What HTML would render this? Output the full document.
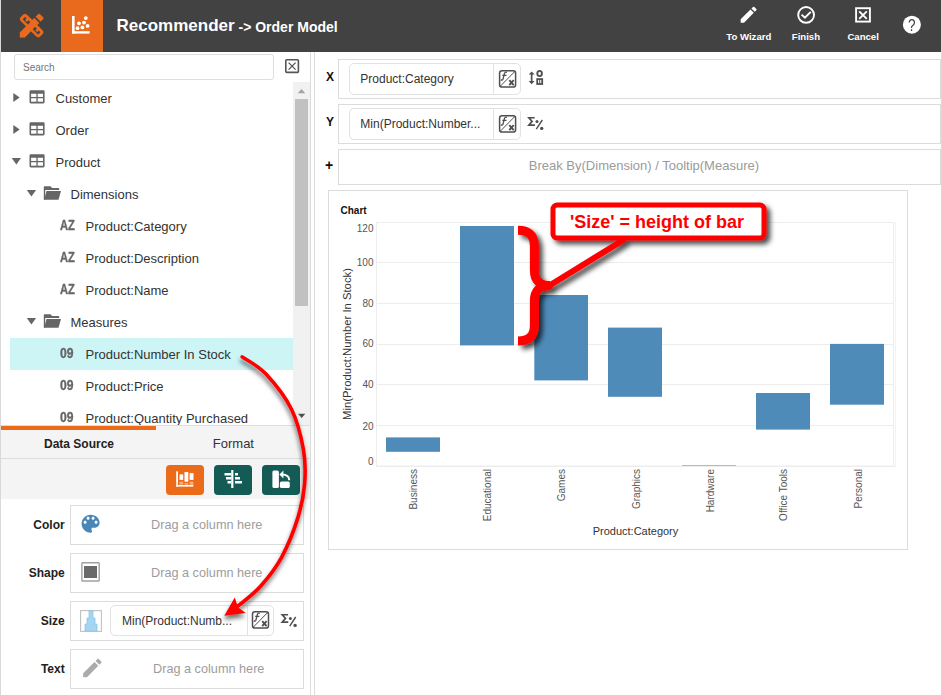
<!DOCTYPE html>
<html><head><meta charset="utf-8">
<style>
*{box-sizing:border-box}
html,body{margin:0;padding:0}
body{width:942px;height:695px;overflow:hidden;position:relative;background:#fff;font-family:"Liberation Sans",sans-serif;color:#333}
.a{position:absolute}
.t{position:absolute;white-space:nowrap;line-height:normal}
.b{font-weight:bold}
svg{position:absolute;overflow:visible}
</style></head><body>

<!-- page borders -->
<div class="a" style="left:0;top:0;width:1px;height:695px;background:#d9d9d9"></div>
<div class="a" style="left:941px;top:0;width:1px;height:695px;background:#d9d9d9"></div>

<!-- HEADER -->
<div class="a" style="left:1px;top:0;width:940px;height:52px;background:#424242"></div>
<div class="a" style="left:61px;top:0;width:42px;height:52px;background:#e96a1d"></div>
<div id="title" class="t b" style="left:116.5px;top:15.9px;font-size:17px;color:#fff">Recommender</div>
<div class="t b" style="left:238.5px;top:18.6px;font-size:14px;color:#fff">-&gt; Order Model</div>

<div class="t b" style="left:708.85px;width:80px;text-align:center;top:31.4px;font-size:9.6px;color:#fff">To Wizard</div>
<div class="t b" style="left:765.95px;width:80px;text-align:center;top:31.4px;font-size:9.6px;color:#fff">Finish</div>
<div class="t b" style="left:823.15px;width:80px;text-align:center;top:31.4px;font-size:9.6px;color:#fff">Cancel</div>




<!-- header icons -->
<svg style="left:15.8px;top:10.4px" width="31.3" height="31.3" viewBox="0 0 24 24"><path fill="#e96a1d" stroke="#e96a1d" stroke-width="0.2" d="M16.24 11.51l1.57-1.57-3.75-3.75-1.57 1.56-4.14-4.13c-.78-.78-2.050-.78-2.83 0l-1.9 1.9c-.78.78-.78 2.05 0 2.83l4.13 4.13L3 17.25V21h3.75l4.76-4.76 4.13 4.13c.95.95 2.23.6 2.830 0l1.9-1.9c.78-.78.78-2.05 0-2.83l-4.13-4.13zm-7-.24L5.04 7.06l1.89-1.9L8.2 6.44l-1.18 1.18 1.41 1.41 1.19-1.19 1.45 1.45-1.82 1.88zm7.71 7.71l-4.21-4.21 1.9-1.9 1.45 1.45-1.18 1.18 1.41 1.41 1.18-1.18 1.27 1.27-1.82 1.980zM20.71 7.04c.39-.39.39-1.02 0-1.41l-2.34-2.34c-.47-.47-1.12-.29-1.41 0l-1.83 1.83 3.75 3.75 1.83-1.83z"/></svg>
<svg style="left:0;top:0" width="942" height="52">
<g fill="#fff">
<rect x="72" y="16" width="2.6" height="17.6"/>
<rect x="72" y="31.2" width="17.6" height="2.4"/>
<circle cx="85.8" cy="18.1" r="1.9"/>
<circle cx="84" cy="22.6" r="1.9"/>
<circle cx="79" cy="23.3" r="1.9"/>
<circle cx="87.6" cy="25.9" r="1.9"/>
<circle cx="82.4" cy="27.4" r="1.9"/>
<circle cx="77.5" cy="28.2" r="1.9"/>
</g>
</svg>
<svg style="left:738.3px;top:4.2px" width="21.3" height="21.3" viewBox="0 0 24 24"><path fill="#fff" d="M3 17.25V21h3.75L17.81 9.94l-3.75-3.75L3 17.25zM20.71 7.04c.39-.39.39-1.020 0-1.41l-2.34-2.34c-.39-.39-1.02-.39-1.41 0l-1.83 1.83 3.75 3.75 1.83-1.83z"/></svg>
<svg style="left:0;top:0" width="942" height="52">
<circle cx="806.1" cy="14.9" r="7.9" fill="none" stroke="#fff" stroke-width="1.9"/>
<polyline points="801.6,14.6 804.9,17.7 810.8,11.8" fill="none" stroke="#fff" stroke-width="1.9"/>
<rect x="856.1" y="8.2" width="13.8" height="13.4" fill="none" stroke="#fff" stroke-width="1.9"/>
<path d="M859.2,11.3 L866.8,18.9 M866.8,11.3 L859.2,18.9" stroke="#fff" stroke-width="1.9"/>
<circle cx="911.9" cy="24.7" r="9" fill="#fff"/>
</svg>
<div class="t" style="left:907.6px;top:16px;font-size:16.5px;color:#424242;transform-origin:0 0;transform:scaleX(0.82)">?</div>

<!-- LEFT PANEL -->
<div class="a" style="left:310px;top:52px;width:1px;height:643px;background:#dcdcdc"></div>
<div class="a" style="left:314px;top:52px;width:1px;height:643px;background:#dcdcdc"></div>

<div class="a" style="left:14px;top:54px;width:260px;height:26px;border:1px solid #dedede;border-radius:3px"></div>
<div class="t" style="left:23px;top:61.5px;font-size:10px;color:#757575">Search</div>

<!-- scrollbar -->
<div class="a" style="left:293px;top:82px;width:17px;height:343px;background:#f1f1f1"></div>
<div class="a" style="left:295px;top:99px;width:13px;height:207px;background:#c1c1c1"></div>

<!-- highlight -->
<div class="a" style="left:10px;top:338px;width:283px;height:32px;background:#cdf5f5"></div>

<!-- tree text -->
<div class="t" style="left:55.5px;top:91px;font-size:13px">Customer</div>
<div class="t" style="left:55.5px;top:123px;font-size:13px">Order</div>
<div class="t" style="left:55.5px;top:155px;font-size:13px">Product</div>
<div class="t" style="left:70.5px;top:187px;font-size:13px">Dimensions</div>
<div class="t" style="left:85.5px;top:219px;font-size:13px">Product:Category</div>
<div class="t" style="left:85.5px;top:251px;font-size:13px">Product:Description</div>
<div class="t" style="left:85.5px;top:283px;font-size:13px">Product:Name</div>
<div class="t" style="left:70.5px;top:315px;font-size:13px">Measures</div>
<div class="t" style="left:85.5px;top:347px;font-size:13px">Product:Number In Stock</div>
<div class="t" style="left:85.5px;top:379px;font-size:13px">Product:Price</div>
<div class="a" style="left:1px;top:400px;width:292px;height:25px;overflow:hidden">
<div class="t" style="left:84.5px;top:11px;font-size:13px">Product:Quantity Purchased</div>
</div>

<svg style="left:0;top:0" width="310" height="430">
<g fill="#666">
<polygon points="13.3,93 19.7,97.5 13.3,102"/>
<polygon points="13.3,125 19.7,129.5 13.3,134"/>
<polygon points="11.7,158 21.0,158 16.35,164.5"/>
<polygon points="26.8,190 36.1,190 31.450000000000003,196.5"/>
<polygon points="26.8,318 36.1,318 31.450000000000003,324.5"/>
</g>
<g transform="translate(29.5,90.3)"><rect x="0" y="0" width="15.1" height="13.1" rx="1.3" fill="#666"/><g fill="#fff"><rect x="1.6" y="3.45" width="5.3" height="3.2"/><rect x="8.2" y="3.45" width="5.3" height="3.2"/><rect x="1.6" y="7.95" width="5.3" height="3.45"/><rect x="8.2" y="7.95" width="5.3" height="3.45"/></g></g>
<g transform="translate(29.5,122.3)"><rect x="0" y="0" width="15.1" height="13.1" rx="1.3" fill="#666"/><g fill="#fff"><rect x="1.6" y="3.45" width="5.3" height="3.2"/><rect x="8.2" y="3.45" width="5.3" height="3.2"/><rect x="1.6" y="7.95" width="5.3" height="3.45"/><rect x="8.2" y="7.95" width="5.3" height="3.45"/></g></g>
<g transform="translate(29.5,154.3)"><rect x="0" y="0" width="15.1" height="13.1" rx="1.3" fill="#666"/><g fill="#fff"><rect x="1.6" y="3.45" width="5.3" height="3.2"/><rect x="8.2" y="3.45" width="5.3" height="3.2"/><rect x="1.6" y="7.95" width="5.3" height="3.45"/><rect x="8.2" y="7.95" width="5.3" height="3.45"/></g></g>
<g transform="translate(43.8,186.2)" fill="#666"><path d="M0,0.8 Q0,0 0.8,0 H6.8 L8.2,1.8 H14.6 Q15.4,1.8 15.4,2.6 V3.7 H1.4 V13.5 H0 Z"/><path d="M2.7,4.8 H17.2 L14.7,13.5 H0.4 Z"/></g>
<g transform="translate(43.8,314.2)" fill="#666"><path d="M0,0.8 Q0,0 0.8,0 H6.8 L8.2,1.8 H14.6 Q15.4,1.8 15.4,2.6 V3.7 H1.4 V13.5 H0 Z"/><path d="M2.7,4.8 H17.2 L14.7,13.5 H0.4 Z"/></g>
</svg>
<div class="t b" style="left:60px;top:216.83px;font-size:14px;color:#666;-webkit-text-stroke:0.35px #666;transform-origin:0 0;transform:scaleX(0.796)">AZ</div>
<div class="t b" style="left:60px;top:248.83px;font-size:14px;color:#666;-webkit-text-stroke:0.35px #666;transform-origin:0 0;transform:scaleX(0.796)">AZ</div>
<div class="t b" style="left:60px;top:280.83px;font-size:14px;color:#666;-webkit-text-stroke:0.35px #666;transform-origin:0 0;transform:scaleX(0.796)">AZ</div>
<div class="t b" style="left:60.2px;top:345.13px;font-size:14px;color:#666;-webkit-text-stroke:0.35px #666;transform-origin:0 0;transform:scaleX(0.867)">09</div>
<div class="t b" style="left:60.2px;top:377.13px;font-size:14px;color:#666;-webkit-text-stroke:0.35px #666;transform-origin:0 0;transform:scaleX(0.867)">09</div>
<div class="t b" style="left:60.2px;top:409.13px;font-size:14px;color:#666;-webkit-text-stroke:0.35px #666;transform-origin:0 0;transform:scaleX(0.867)">09</div>
<svg style="left:0;top:0" width="320" height="430">
<rect x="285.8" y="59.8" width="12.6" height="12.6" rx="1" fill="none" stroke="#555" stroke-width="1.6"/>
<path d="M288.6,62.6 L295.6,69.6 M295.6,62.6 L288.6,69.6" stroke="#555" stroke-width="1.3"/>
<polygon points="297.8,93.2 305.2,93.2 301.5,89" fill="#a3a3a3"/>
<polygon points="298,413.8 305.3,413.8 301.65,418.1" fill="#505050"/>
</svg>

<!-- tabs -->
<div class="a" style="left:1px;top:425px;width:309px;height:1px;background:#dddddd"></div>
<div class="a" style="left:1px;top:426px;width:309px;height:73px;background:#f4f4f4"></div>
<div class="a" style="left:1px;top:426px;width:155px;height:4px;background:#ec6b1b"></div>
<div class="a" style="left:1px;top:458px;width:309px;height:1px;background:#dddddd"></div>
<div class="t b" style="left:44px;top:436.7px;font-size:12px;color:#222">Data Source</div>
<div class="t" style="left:212.8px;top:436.3px;font-size:13px;color:#333">Format</div>

<!-- buttons -->
<div class="a" style="left:166px;top:465px;width:38px;height:30px;background:#ec6b1b;border-radius:4px"></div>
<div class="a" style="left:214px;top:465px;width:38px;height:30px;background:#145a55;border-radius:4px"></div>
<div class="a" style="left:262px;top:465px;width:38px;height:30px;background:#145a55;border-radius:4px"></div>

<!-- drop zones -->
<div class="a" style="left:70px;top:505px;width:234px;height:40px;border:1px solid #dcdcdc"></div>
<div class="a" style="left:70px;top:553px;width:234px;height:40px;border:1px solid #dcdcdc"></div>
<div class="a" style="left:70px;top:601px;width:234px;height:40px;border:1px solid #dcdcdc"></div>
<div class="a" style="left:70px;top:649px;width:234px;height:40px;border:1px solid #dcdcdc"></div>
<div class="t b" style="right:877.3px;top:518.1px;font-size:12px;color:#222">Color</div>
<div class="t b" style="right:877.3px;top:566.1px;font-size:12px;color:#222">Shape</div>
<div class="t b" style="right:877.3px;top:613.9px;font-size:12px;color:#222">Size</div>
<div class="t b" style="right:877.3px;top:661.8px;font-size:12px;color:#222">Text</div>
<div class="t" style="left:151px;top:517.6px;font-size:12.7px;color:#9d9d9d">Drag a column here</div>
<div class="t" style="left:151px;top:565.6px;font-size:12.7px;color:#9d9d9d">Drag a column here</div>
<div class="t" style="left:153px;top:661.6px;font-size:12.7px;color:#9d9d9d">Drag a column here</div>
<div class="a" style="left:110px;top:605px;width:164px;height:31px;border:1px solid #e2e2e2;border-radius:5px"></div>
<div class="a" style="left:247px;top:606px;width:1px;height:29px;background:#e2e2e2"></div>
<div class="t" style="left:122px;top:614px;font-size:12px;color:#333">Min(Product:Numb...</div>

<!-- RIGHT PANEL -->
<div class="a" style="left:338px;top:59px;width:603px;height:40px;border:1px solid #dcdcdc"></div>
<div class="a" style="left:338px;top:104px;width:603px;height:40px;border:1px solid #dcdcdc"></div>
<div class="a" style="left:338px;top:149px;width:603px;height:36px;border:1px solid #dcdcdc"></div>
<div class="t b" style="left:326px;top:69.8px;font-size:12px;color:#111">X</div>
<div class="t b" style="left:326px;top:114.9px;font-size:12px;color:#111">Y</div>
<div class="t b" style="left:325px;top:156.8px;font-size:14px;color:#111">+</div>

<div class="a" style="left:349px;top:63px;width:172px;height:32px;border:1px solid #e2e2e2;border-radius:5px"></div>
<div class="a" style="left:493px;top:64px;width:1px;height:30px;background:#e2e2e2"></div>
<div class="t" style="left:360.3px;top:71.9px;font-size:12px;color:#333">Product:Category</div>
<div class="a" style="left:349px;top:108px;width:172px;height:32px;border:1px solid #e2e2e2;border-radius:5px"></div>
<div class="a" style="left:493px;top:109px;width:1px;height:30px;background:#e2e2e2"></div>
<div class="t" style="left:360.3px;top:116.8px;font-size:12px;color:#333">Min(Product:Number...</div>
<div class="t" style="left:528.8px;top:158px;font-size:13px;color:#9a9a9a">Break By(Dimension) / Tooltip(Measure)</div>

<!-- chart box -->
<div class="a" style="left:328px;top:190px;width:580px;height:360px;border:1px solid #dcdcdc"></div>
<div class="t b" style="left:340.5px;top:204.7px;font-size:10px;color:#111">Chart</div>


<svg style="left:0;top:0" width="942" height="695">
<g transform="translate(498.9,70)">
<rect x="0.7" y="0.7" width="16" height="16.4" rx="2.4" fill="none" stroke="#4f4f4f" stroke-width="1.5"/>
<line x1="1.2" y1="16.4" x2="16.2" y2="1.2" stroke="#4f4f4f" stroke-width="1"/>
<path d="M8,2.5 Q6.4,1.6 5.6,3.3 L4.1,9.2 Q3.5,10.4 1.9,9.8 M3.4,5.3 H7.6" fill="none" stroke="#4f4f4f" stroke-width="1.3"/>
<path d="M10.4,10.2 L14.8,15.2 M14.8,10.2 L10.4,15.2" fill="none" stroke="#4f4f4f" stroke-width="1.9"/>
</g><g transform="translate(498.9,115)">
<rect x="0.7" y="0.7" width="16" height="16.4" rx="2.4" fill="none" stroke="#4f4f4f" stroke-width="1.5"/>
<line x1="1.2" y1="16.4" x2="16.2" y2="1.2" stroke="#4f4f4f" stroke-width="1"/>
<path d="M8,2.5 Q6.4,1.6 5.6,3.3 L4.1,9.2 Q3.5,10.4 1.9,9.8 M3.4,5.3 H7.6" fill="none" stroke="#4f4f4f" stroke-width="1.3"/>
<path d="M10.4,10.2 L14.8,15.2 M14.8,10.2 L10.4,15.2" fill="none" stroke="#4f4f4f" stroke-width="1.9"/>
</g><g transform="translate(251.8,611)">
<rect x="0.7" y="0.7" width="16" height="16.4" rx="2.4" fill="none" stroke="#4f4f4f" stroke-width="1.5"/>
<line x1="1.2" y1="16.4" x2="16.2" y2="1.2" stroke="#4f4f4f" stroke-width="1"/>
<path d="M8,2.5 Q6.4,1.6 5.6,3.3 L4.1,9.2 Q3.5,10.4 1.9,9.8 M3.4,5.3 H7.6" fill="none" stroke="#4f4f4f" stroke-width="1.3"/>
<path d="M10.4,10.2 L14.8,15.2 M14.8,10.2 L10.4,15.2" fill="none" stroke="#4f4f4f" stroke-width="1.9"/>
</g><g transform="translate(528,117)">
<path d="M6.7,0.75 H0.9 L4.1,4.4 L0.9,8.05 H6.9" fill="none" stroke="#4f4f4f" stroke-width="1.7" stroke-linejoin="miter"/>
<line x1="8.3" y1="12.2" x2="14.3" y2="3" stroke="#4f4f4f" stroke-width="1.4"/>
<circle cx="9" cy="4.5" r="1.5" fill="#4f4f4f"/>
<circle cx="13.7" cy="11.4" r="1.7" fill="#4f4f4f"/>
</g><g transform="translate(281.4,614)">
<path d="M6.7,0.75 H0.9 L4.1,4.4 L0.9,8.05 H6.9" fill="none" stroke="#4f4f4f" stroke-width="1.7" stroke-linejoin="miter"/>
<line x1="8.3" y1="12.2" x2="14.3" y2="3" stroke="#4f4f4f" stroke-width="1.4"/>
<circle cx="9" cy="4.5" r="1.5" fill="#4f4f4f"/>
<circle cx="13.7" cy="11.4" r="1.7" fill="#4f4f4f"/>
</g><g fill="#4f4f4f">
<rect x="530.8" y="73" width="1.7" height="9.6"/>
<polygon points="528.7,74.6 534.6,74.6 531.65,71.4"/>
<polygon points="528.7,81 534.6,81 531.65,84.2"/>
</g>
<ellipse cx="539.6" cy="73.5" rx="2.3" ry="2.6" fill="none" stroke="#4f4f4f" stroke-width="1.9"/>
<rect x="537.2" y="79.1" width="5" height="4.9" fill="none" stroke="#4f4f4f" stroke-width="1.8"/>
<line x1="539.7" y1="80" x2="539.7" y2="83.2" stroke="#4f4f4f" stroke-width="1"/>
<g fill="#fff">
<rect x="176.2" y="471.3" width="1.8" height="15.3"/>
<rect x="176.2" y="485" width="17.1" height="1.6"/>
<rect x="179.5" y="474.4" width="3.7" height="5.5"/>
<rect x="184.5" y="472.1" width="3.8" height="9.6"/>
<rect x="189.6" y="473.1" width="3.9" height="6.8"/>
<g opacity="0.45"><rect x="179.5" y="481.7" width="3.7" height="3"/><rect x="184.5" y="483" width="3.8" height="1.7"/><rect x="189.6" y="481.7" width="3.9" height="3"/></g>
</g>
<g fill="#fff">
<rect x="231.2" y="470" width="2.2" height="18"/>
<rect x="224.5" y="473" width="6.7" height="2.5"/><rect x="235" y="473" width="3" height="2.5"/>
<rect x="226" y="477" width="5.2" height="2.5"/><rect x="235" y="477" width="5" height="2.5"/>
<rect x="227.5" y="481" width="3.7" height="2.5"/><rect x="235" y="481" width="7" height="2.5"/>
</g>
<g fill="#fff">
<rect x="272.4" y="470.5" width="6.5" height="17.5" rx="1.6"/>
<rect x="279.9" y="481.5" width="9.9" height="6.5" rx="1.6"/>
</g>
<path d="M282,474.6 Q289,474.6 289.3,480.2" fill="none" stroke="#fff" stroke-width="2"/>
<polygon points="279.4,474.6 283.4,470.6 283.4,478.4" fill="#fff"/>
<svg x="78.6" y="511.8" width="24" height="24" viewBox="0 0 24 24"><path fill="#4a87b9" d="M12 3c-4.970 0-9 4.03-9 9s4.03 9 9 9c.83 0 1.5-.67 1.5-1.5 0-.39-.15-.74-.39-1.01-.23-.26-.38-.61-.38-.99 0-.83.67-1.5 1.5-1.5H16c2.76 0 5-2.24 5-5 0-4.42-4.03-8-9-8zm-5.5 9c-.83 0-1.5-.67-1.5-1.5S5.67 9 6.5 9 8 9.67 8 10.5 7.33 12 6.5 12zm3-4C8.67 8 8 7.33 8 6.5S8.67 5 9.5 5s1.5.67 1.5 1.5S10.33 8 9.5 8zm5 0c-.83 0-1.5-.67-1.5-1.5S13.67 5 14.5 5s1.5.67 1.5 1.5S15.33 8 14.5 8zm3 4c-.83 0-1.5-.67-1.5-1.5S16.67 9 17.5 9s1.5.67 1.5 1.5-.67 1.5-1.5 1.5z"/></svg>
<rect x="81.9" y="562.7" width="17.3" height="18.3" rx="0.8" fill="none" stroke="#a0a0a0" stroke-width="1.4"/>
<rect x="84" y="566" width="13" height="12" fill="#6a6a6a"/>
<rect x="80.6" y="610.6" width="20.8" height="20.8" fill="none" stroke="#c0c0c0" stroke-width="1.1"/>
<path d="M89,610.8 H93 V618 H95 V624.1 H97 V631.2 H85 V624.1 H87 V618 H89 Z" fill="#a6d5f2" stroke="#8cc5e8" stroke-width="0.8"/>
<svg x="80.1" y="655.7" width="24.5" height="24.5" viewBox="0 0 24 24"><path fill="#ababab" d="M3 17.25V21h3.75L17.81 9.94l-3.75-3.75L3 17.25zM20.71 7.04c.39-.39.39-1.02 0-1.41l-2.34-2.34c-.39-.39-1.02-.39-1.41 0l-1.83 1.83 3.75 3.75 1.83-1.83z"/></svg>
</svg>

<!-- plot -->
<svg style="left:0;top:0" width="942" height="695">
<g fill="none" stroke="#ededed" stroke-width="1">
<rect x="376.5" y="222.5" width="517" height="243.5"/>
<line x1="895.5" y1="222" x2="895.5" y2="467.5" stroke="#f3f3f3"/>
<line x1="377" y1="262.5" x2="894" y2="262.5"/>
<line x1="377" y1="303.5" x2="894" y2="303.5"/>
<line x1="377" y1="344.5" x2="894" y2="344.5"/>
<line x1="377" y1="384.5" x2="894" y2="384.5"/>
<line x1="377" y1="425.5" x2="894" y2="425.5"/>
<line x1="376" y1="466.5" x2="895" y2="466.5"/>
</g>
<g fill="#4e8bb9">
<rect x="386" y="437.4" width="54" height="14.4"/>
<rect x="460" y="226" width="54" height="119.4"/>
<rect x="534.3" y="295" width="53.7" height="85.4"/>
<rect x="608" y="327.6" width="54" height="69.2"/>
<rect x="682" y="465" width="54" height="1" fill="#9fc0da"/>
<rect x="756" y="393" width="54" height="36.6"/>
<rect x="830" y="343.9" width="54" height="60.8"/>
</g>
</svg>
<div class="t" style="right:568.5px;top:222.5px;font-size:10px;color:#555">120</div>
<div class="t" style="right:568.5px;top:257.2px;font-size:10px;color:#555">100</div>
<div class="t" style="right:568.5px;top:297.8px;font-size:10px;color:#555">80</div>
<div class="t" style="right:568.5px;top:338.3px;font-size:10px;color:#555">60</div>
<div class="t" style="right:568.5px;top:378.9px;font-size:10px;color:#555">40</div>
<div class="t" style="right:568.5px;top:420.9px;font-size:10px;color:#555">20</div>
<div class="t" style="right:568.5px;top:455.6px;font-size:10px;color:#555">0</div>
<div class="t" style="left:347.3px;top:344.2px;font-size:11.3px;color:#333;transform:translate(-50%,-50%) rotate(-90deg)">Min(Product:Number In Stock)</div>
<div class="t" style="left:592.7px;top:524.8px;font-size:11px;color:#333">Product:Category</div>
<div class="t" style="right:528.7px;top:468.5px;font-size:10px;color:#555;transform-origin:100% 50%;transform:translate(0,-50%) rotate(-90deg)">Business</div>
<div class="t" style="right:454.56px;top:468.5px;font-size:10px;color:#555;transform-origin:100% 50%;transform:translate(0,-50%) rotate(-90deg)">Educational</div>
<div class="t" style="right:380.41999999999996px;top:468.5px;font-size:10px;color:#555;transform-origin:100% 50%;transform:translate(0,-50%) rotate(-90deg)">Games</div>
<div class="t" style="right:306.28px;top:468.5px;font-size:10px;color:#555;transform-origin:100% 50%;transform:translate(0,-50%) rotate(-90deg)">Graphics</div>
<div class="t" style="right:232.14px;top:468.5px;font-size:10px;color:#555;transform-origin:100% 50%;transform:translate(0,-50%) rotate(-90deg)">Hardware</div>
<div class="t" style="right:158.0px;top:468.5px;font-size:10px;color:#555;transform-origin:100% 50%;transform:translate(0,-50%) rotate(-90deg)">Office Tools</div>
<div class="t" style="right:83.8599999999999px;top:468.5px;font-size:10px;color:#555;transform-origin:100% 50%;transform:translate(0,-50%) rotate(-90deg)">Personal</div>

<!-- ANNOTATIONS -->
<svg style="left:0;top:0" width="942" height="695">
<defs>
<filter id="sh" x="-20%" y="-20%" width="140%" height="140%">
<feDropShadow dx="3.8" dy="3.8" stdDeviation="2.6" flood-color="#000" flood-opacity="0.7"/>
</filter>
<filter id="sh2" x="-50%" y="-20%" width="200%" height="140%">
<feDropShadow dx="-0.5" dy="4" stdDeviation="2" flood-color="#000" flood-opacity="0.55"/>
</filter>
</defs>
<g filter="url(#sh)">
<path d="M518,230.3 Q534.4,230.3 534.4,246 L534.4,270 Q534.4,285.5 550,285.5 Q534.4,285.5 534.4,301 L534.4,325.5 Q534.4,341 518,341" fill="none" stroke="#ff0000" stroke-width="9" stroke-linejoin="miter"/>
<path d="M548.7,286 L625,239" fill="none" stroke="#ff0000" stroke-width="6"/>
<circle cx="548.7" cy="286" r="4.2" fill="#ff0000"/>
<rect x="553" y="205" width="211" height="33" rx="4" ry="4" fill="#fff" stroke="#ff0000" stroke-width="5"/>
</g>
<g filter="url(#sh2)">
<path d="M242.2,356.9 C246.2,359.8 257.8,365.3 266.0,374.1 C274.2,382.9 285.4,396.9 291.6,409.5 C297.8,422.1 301.2,437.0 303.4,449.4 C305.6,461.8 305.5,472.7 304.6,484.0 C303.7,495.3 301.8,505.2 298.0,517.4 C294.2,529.6 287.8,545.9 281.6,557.3 C275.4,568.7 268.2,577.6 261.0,585.8 C253.8,593.9 242.2,602.8 236,607.5" fill="none" stroke="#ff0000" stroke-width="3.6" stroke-linecap="round"/>
<path d="M224.3,615.8 L234.7,597.4 L238.2,607.4 L245.8,613 Z" fill="#ff0000"/>
</g>
</svg>
<div class="t b" style="left:570px;top:211.8px;font-size:18px;color:#ff0000">'Size' = height of bar</div>
</body></html>
